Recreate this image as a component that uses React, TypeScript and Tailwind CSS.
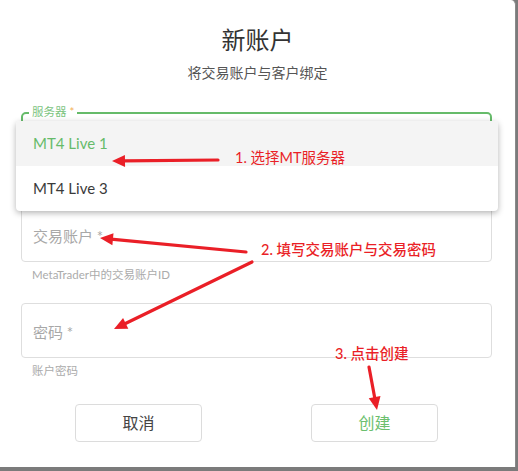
import React from "react";

const RED = "#ea1f27";

function Arrow({ x1, y1, x2, y2 }: { x1: number; y1: number; x2: number; y2: number }) {
    // line from (x1,y1) to tip (x2,y2) with a filled head
    const dx = x2 - x1;
    const dy = y2 - y1;
    const len = Math.hypot(dx, dy);
    const ux = dx / len;
    const uy = dy / len;
    const hl = 13;
    const hw = 6;
    const bx = x2 - ux * hl;
    const by = y2 - uy * hl;
    const pts = `${x2},${y2} ${bx - uy * hw},${by + ux * hw} ${bx + uy * hw},${by - ux * hw}`;
    return (
        <g>
            <line x1={x1} y1={y1} x2={bx + ux * 2} y2={by + uy * 2} stroke={RED} strokeWidth={3.2} strokeLinecap="round" />
            <polygon points={pts} fill={RED} />
        </g>
    );
}

function Field({ label, helper }: { label: string; helper: string }) {
    return (
        <div>
            <div className="h-[55px] rounded-[4px] border border-[#dedede] flex items-center pl-[11px] pt-[4px]">
                <span className="text-[15px] text-[#a8a8a8]">{label}</span>
            </div>
            <div className="mt-[5px] h-[16px] pl-[11px] text-[11.5px] leading-[16px] text-[#ababab]">{helper}</div>
        </div>
    );
}

export default function App() {
    return (
        <div
            className="w-[518px] h-[471px] bg-[#7b7b7b] overflow-hidden"
            style={{ fontFamily: "Lato, 'Noto Sans CJK SC', sans-serif" }}
        >
            <div className="relative w-[516px] h-[467px] bg-white rounded-tr-[5px] border-r border-[#8a8a8a]">
                <h1 className="pt-[24px] text-center text-[24px] leading-[32px] text-[#333]">新账户</h1>
                <p className="mt-[7px] text-center text-[14px] leading-[20px] text-[#555]">将交易账户与客户绑定</p>

                <div className="ml-[21px] w-[471px] mt-[29px] flex flex-col gap-[20px]">
                    <div>
                        <div className="relative h-[55px] rounded-[5px] border-2 border-[#66bb6a]">
                            <span className="absolute left-[6px] top-[-9px] bg-white px-[3px] text-[11.5px] leading-[14px] text-[#7cc47f]">
                                服务器 <span className="text-[#f3b05a]">*</span>
                            </span>
                        </div>
                        <div className="mt-[5px] h-[15px]" />
                    </div>
                    <Field label="交易账户 *" helper="MetaTrader中的交易账户ID" />
                    <Field label="密码 *" helper="账户密码" />
                </div>

                <div className="mt-[25px] flex">
                    <button className="ml-[75px] w-[127px] h-[38px] rounded-[4px] border border-[#dcdcdc] bg-white text-[16px] text-[#444]">
                        取消
                    </button>
                    <button className="ml-[109px] w-[127px] h-[38px] rounded-[4px] border border-[#dcdcdc] bg-white text-[16px] text-[#6cbf6e]">
                        创建
                    </button>
                </div>

                {/* open server dropdown */}
                <div className="absolute left-[16px] top-[121px] w-[482px] rounded-[4px] bg-white shadow-[0_2px_6px_rgba(0,0,0,0.3)] overflow-hidden">
                    <div className="h-[45px] bg-[#f4f4f4] flex items-center pl-[17px] text-[15px] text-[#66bb6a]">MT4 Live 1</div>
                    <div className="h-[45px] flex items-center pl-[17px] text-[15px] text-[#3a3a3a]">MT4 Live 3</div>
                </div>

                {/* annotations */}
                <svg className="absolute left-0 top-0" width={516} height={467}>
                    <Arrow x1={218} y1={160} x2={112} y2={161} />
                    <Arrow x1={246} y1={252} x2={100} y2={238} />
                    <Arrow x1={252} y1={262} x2={114} y2={329} />
                    <Arrow x1={369} y1={367} x2={377} y2={410} />
                </svg>
                <span className="absolute left-[235px] top-[149px] text-[14.5px] leading-[18px]" style={{ color: RED }}>
                    1. 选择MT服务器
                </span>
                <span className="absolute left-[261px] top-[241px] text-[14.5px] leading-[18px] font-medium" style={{ color: RED }}>
                    2. 填写交易账户与交易密码
                </span>
                <span className="absolute left-[335px] top-[345px] text-[14.5px] leading-[18px] font-medium" style={{ color: RED }}>
                    3. 点击创建
                </span>
            </div>
        </div>
    );
}
